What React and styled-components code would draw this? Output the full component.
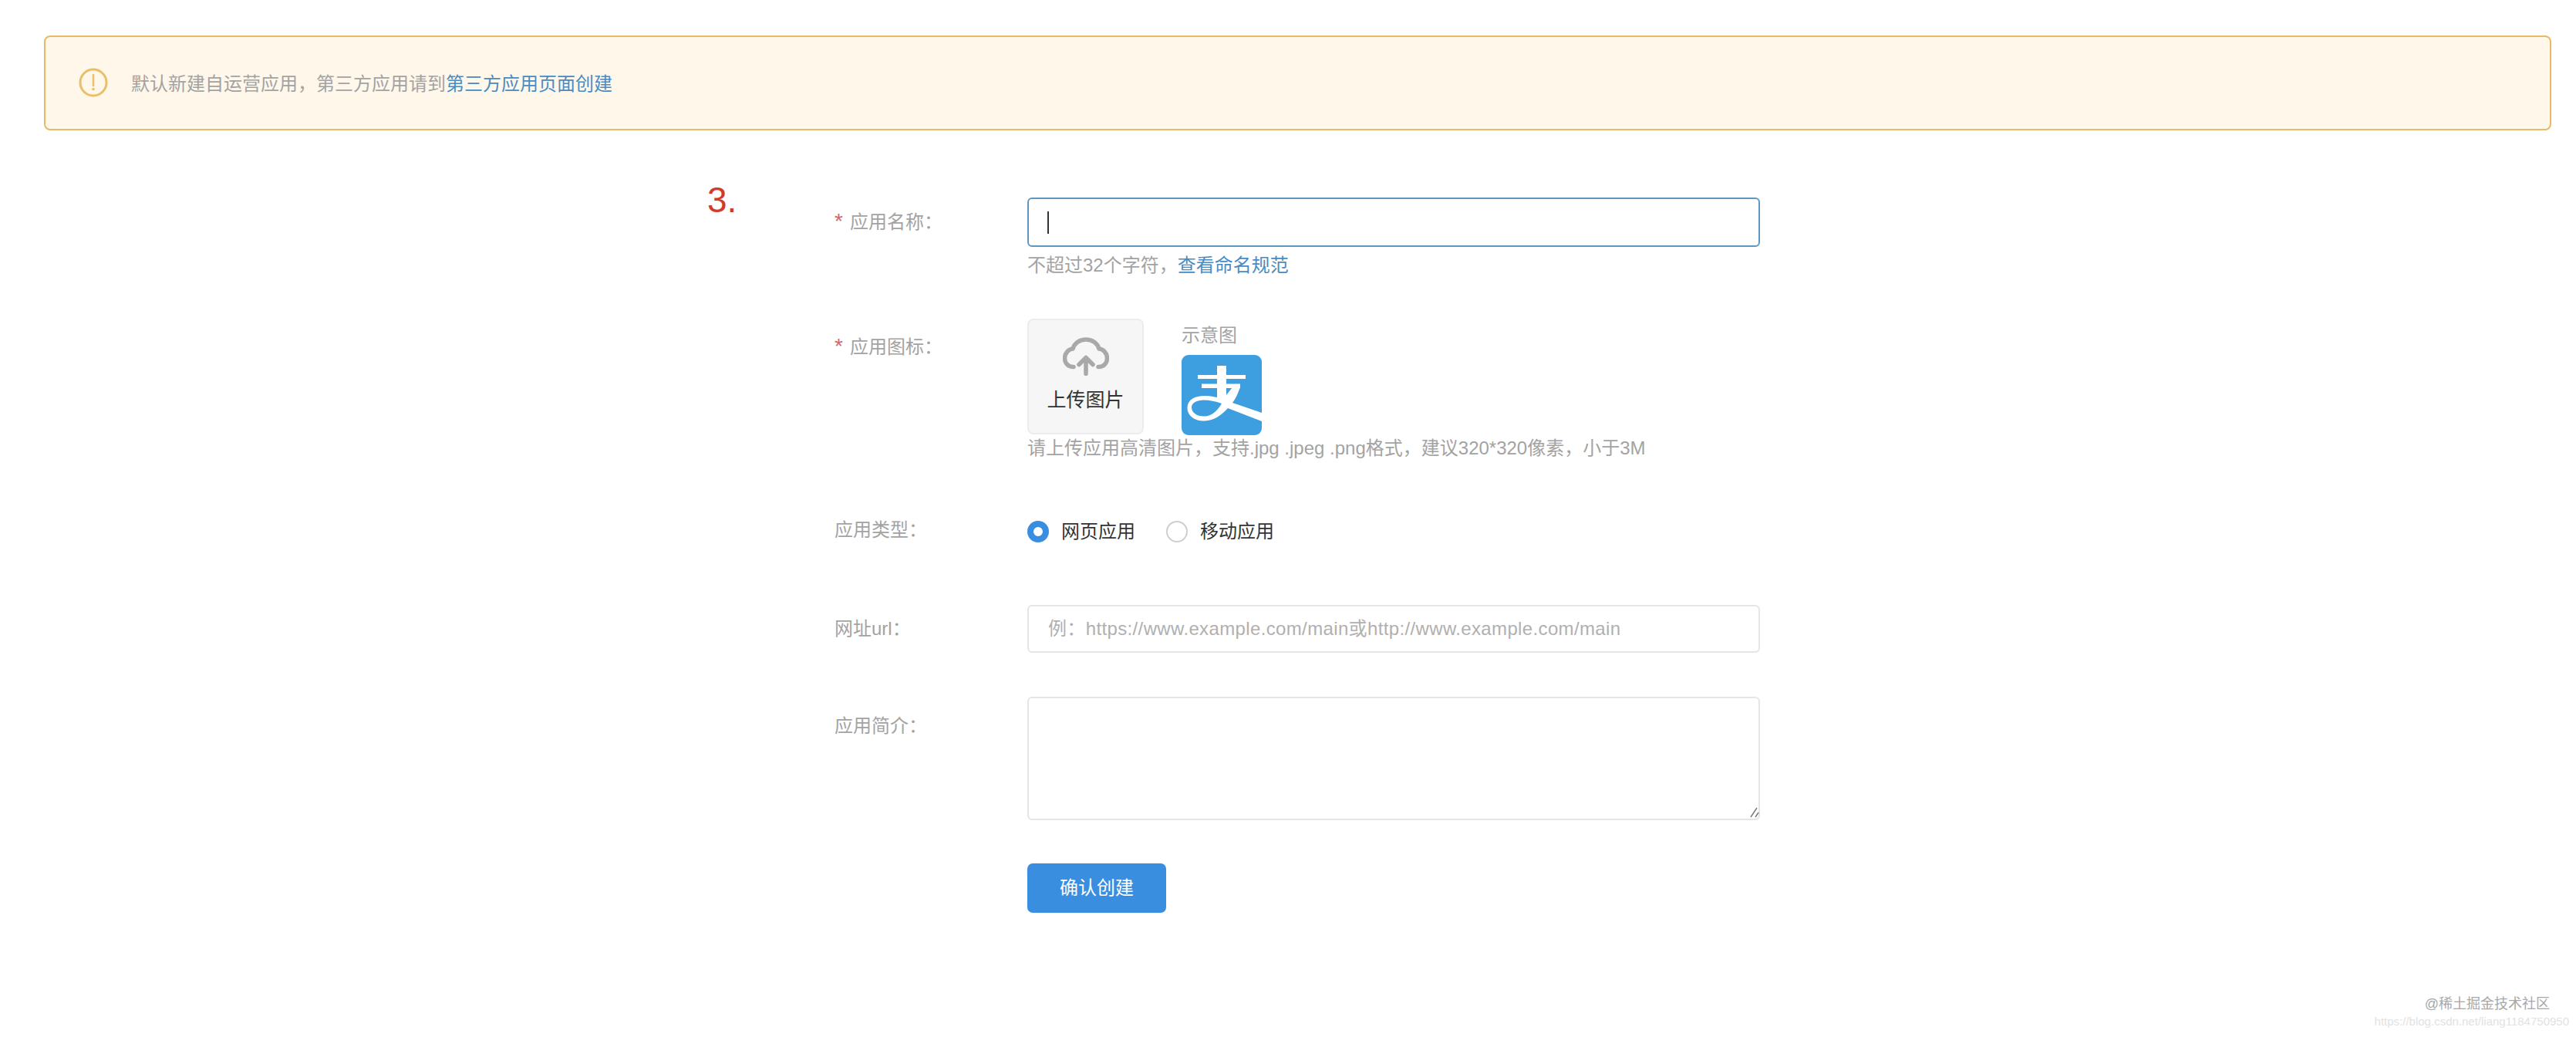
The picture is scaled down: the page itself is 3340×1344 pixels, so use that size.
import React from 'react';
import styled, { createGlobalStyle } from 'styled-components';

const GlobalStyle = createGlobalStyle`
  html, body {
    margin: 0;
    padding: 0;
    background: #fff;
  }
  body {
    font-family: "Liberation Sans", "Noto Sans CJK SC", sans-serif;
    font-size: 24px;
    color: #a3a3a3;
  }
`;

const App = () => {
  return (
    <Page>
      <GlobalStyle />
      <Alert>
        <WarningIcon />
        <span>
          默认新建自运营应用&#xFF0C;第三方应用请到<Link>第三方应用页面创建</Link>
        </span>
      </Alert>

      <Content>
        <StepMark>3.</StepMark>
        <Form>
          <Row>
            <Label $line={64}><Star>*</Star>应用名称&#xFF1A;</Label>
            <div>
              <FocusedInput><Caret /></FocusedInput>
              <Hint $top={6} $line={36}>
                不超过32个字符&#xFF0C;<Link>查看命名规范</Link>
              </Hint>
            </div>
          </Row>

          <Row $top={51}>
            <Label $line={73}><Star>*</Star>应用图标&#xFF1A;</Label>
            <div>
              <UploadRow>
                <UploadBox>
                  <CloudIcon />
                  <UploadText>上传图片</UploadText>
                </UploadBox>
                <Sample>
                  <SampleTitle>示意图</SampleTitle>
                  <AlipayLogo />
                </Sample>
              </UploadRow>
              <Hint $line={34}>
                请上传应用高清图片&#xFF0C;支持.jpg .jpeg .png格式&#xFF0C;建议320*320像素&#xFF0C;小于3M
              </Hint>
            </div>
          </Row>

          <Row $top={59}>
            <Label $line={60}>应用类型&#xFF1A;</Label>
            <RadioGroup>
              <RadioOption><RadioDot $checked />网页应用</RadioOption>
              <RadioOption><RadioDot />移动应用</RadioOption>
            </RadioGroup>
          </Row>

          <Row $top={63}>
            <Label $line={62}>网址url&#xFF1A;</Label>
            <TextInput readOnly placeholder="例&#xFF1A;https://www.example.com/main或http://www.example.com/main" />
          </Row>

          <Row $top={57}>
            <Label $line={75}>应用简介&#xFF1A;</Label>
            <TextAreaWrap>
              <TextArea readOnly />
              <ResizeHandle viewBox="0 0 12 14" fill="none" stroke="#777" strokeWidth="1.4">
                <path d="M1 13L9 1M7 13L11 7" />
              </ResizeHandle>
            </TextAreaWrap>
          </Row>

          <Row $top={56}>
            <span />
            <SubmitButton>确认创建</SubmitButton>
          </Row>
        </Form>
      </Content>

      <Watermark>
        <WatermarkMain>@稀土掘金技术社区</WatermarkMain>
        <WatermarkUrl>https://blog.csdn.net/liang1184750950</WatermarkUrl>
      </Watermark>
    </Page>
  );
};

const WarningIcon = () => (
  <AlertIconSvg viewBox="0 0 38 38" fill="none">
    <circle cx="19" cy="19" r="17" stroke="#e9bf68" strokeWidth="3" />
    <path d="M19 9v14" stroke="#e9bf68" strokeWidth="2.6" strokeLinecap="round" />
    <circle cx="19" cy="27.500" r="1.8" fill="#e9bf68" />
  </AlertIconSvg>
);

const CloudIcon = () => (
  <CloudSvg viewBox="0 0 60 50" fill="none" stroke="#a9a9a9" strokeWidth="5.500" strokeLinecap="round" strokeLinejoin="round">
    <path d="M14 38.5C6.5 38.5 2.5 33 2.5 27.5C2.5 20.5 7.5 15.5 13 15C15 7.5 22 3 30 3C38 3 45 7.5 47 15C52.5 15.5 57.5 20.5 57.5 27.5C57.5 33 53.5 38.5 46 38.5" />
    <path d="M30 47.5V27M21 35.5L30 26.5L39 35.5" />
  </CloudSvg>
);

const AlipayLogo = () => (
  <LogoSvg viewBox="0 0 104 104" fill="none">
    <rect width="104" height="104" fill="#3d9fe0" />
    <path d="M46 14h12v43H46zM21 26h62v5H21zM26 37.500h50V43H26z" fill="#fff" />
    <path
      fill="#fff"
      fillRule="evenodd"
      d="M66 42H76C73 50 70 57 66 62L104 75V86L60 69C52 78 42 85 30 85.500C16 86 7 78 7.500 68C8 58 17 53 30 53C38 53 46 55 54 57ZM52 63C44 60 36 58.500 29 58.500C20 58.500 13 62 13 68C13 75 20 80 31 79.500C39 79 47 72 52 63Z"
    />
  </LogoSvg>
);

const Page = styled.div`
  position: relative;
  height: 1344px;
  overflow: hidden;
`;

const Alert = styled.div`
  box-sizing: border-box;
  display: flex;
  align-items: center;
  gap: 30px;
  height: 123px;
  margin: 46px 32px 0 57px;
  padding: 0 0 2px 43px;
  background: #fef7ea;
  border: 2px solid #e8b966;
  border-radius: 8px;
`;

const AlertIconSvg = styled.svg`
  width: 38px;
  height: 38px;
  flex-shrink: 0;
`;

const Link = styled.a`
  color: #4a8cc2;
  cursor: pointer;
`;

const Content = styled.div`
  display: flex;
  padding: 87px 0 0 917px;
`;

const StepMark = styled.div`
  width: 165px;
  height: 64px;
  margin-top: -29px;
  font-size: 46px;
  line-height: 64px;
  color: #d23a2a;
`;

const Form = styled.div`
  width: 1200px;
`;

const Row = styled.div`
  display: grid;
  grid-template-columns: 250px 950px;
  margin-top: ${({ $top }) => $top || 0}px;
`;

const Label = styled.div`
  line-height: ${({ $line }) => $line}px;
`;

const Star = styled.span`
  margin-right: 9px;
  font-size: 28px;
  line-height: 1;
  color: #d9636b;
`;

const Hint = styled.div`
  margin-top: ${({ $top }) => $top || 0}px;
  line-height: ${({ $line }) => $line}px;
`;

const FocusedInput = styled.div`
  box-sizing: border-box;
  display: flex;
  align-items: center;
  height: 64px;
  padding-left: 24px;
  border: 2px solid #5e97c0;
  border-radius: 6px;
`;

const Caret = styled.span`
  width: 2px;
  height: 29px;
  background: #333;
`;

const UploadRow = styled.div`
  display: flex;
  gap: 49px;
`;

const UploadBox = styled.div`
  box-sizing: border-box;
  display: flex;
  flex-direction: column;
  align-items: center;
  width: 151px;
  height: 150px;
  padding-top: 22px;
  background: #f6f6f6;
  border: 2px solid #ececec;
  border-radius: 8px;
`;

const CloudSvg = styled.svg`
  width: 60px;
  height: 50px;
`;

const UploadText = styled.div`
  margin-top: 15px;
  font-size: 25px;
  line-height: 32px;
  color: #333;
`;

const Sample = styled.div`
  display: flex;
  flex-direction: column;
`;

const SampleTitle = styled.div`
  height: 47px;
  line-height: 44px;
`;

const LogoSvg = styled.svg`
  width: 104px;
  height: 104px;
  border-radius: 9px;
`;

const RadioGroup = styled.div`
  display: flex;
  align-items: center;
  gap: 40px;
  height: 64px;
`;

const RadioOption = styled.label`
  display: flex;
  align-items: center;
  gap: 16px;
  line-height: 28px;
  color: #333;
`;

const RadioDot = styled.span`
  box-sizing: border-box;
  width: 28px;
  height: 28px;
  border-radius: 50%;
  background: #fff;
  border: ${({ $checked }) => ($checked ? '8px solid #3a8ee0' : '2px solid #cfcfcf')};
`;

const TextInput = styled.input`
  box-sizing: border-box;
  width: 950px;
  height: 62px;
  padding: 0 0 0 25px;
  border: 2px solid #e5e5e5;
  border-radius: 6px;
  outline: none;
  font: inherit;
  letter-spacing: 0.36px;

  &::placeholder {
    color: #b0b0b0;
    opacity: 1;
  }
`;

const TextAreaWrap = styled.div`
  position: relative;
  height: 160px;
`;

const TextArea = styled.textarea`
  box-sizing: border-box;
  display: block;
  width: 950px;
  height: 160px;
  border: 2px solid #e5e5e5;
  border-radius: 6px;
  outline: none;
  resize: none;
`;

const ResizeHandle = styled.svg`
  position: absolute;
  right: 1px;
  bottom: 3px;
  width: 12px;
  height: 14px;
`;

const SubmitButton = styled.button`
  width: 180px;
  height: 64px;
  padding: 0 0 6px;
  border: none;
  border-radius: 7px;
  background: #3a8ee0;
  color: #fff;
  font: inherit;
  cursor: pointer;
`;

const Watermark = styled.div`
  position: absolute;
  right: 9px;
  bottom: 9px;
  text-align: right;
`;

const WatermarkMain = styled.div`
  margin-right: 25px;
  font-size: 18px;
  line-height: 24px;
  color: #a8a8a8;
`;

const WatermarkUrl = styled.div`
  font-size: 15px;
  line-height: 22px;
  color: #e2e2e2;
`;

export default App;
